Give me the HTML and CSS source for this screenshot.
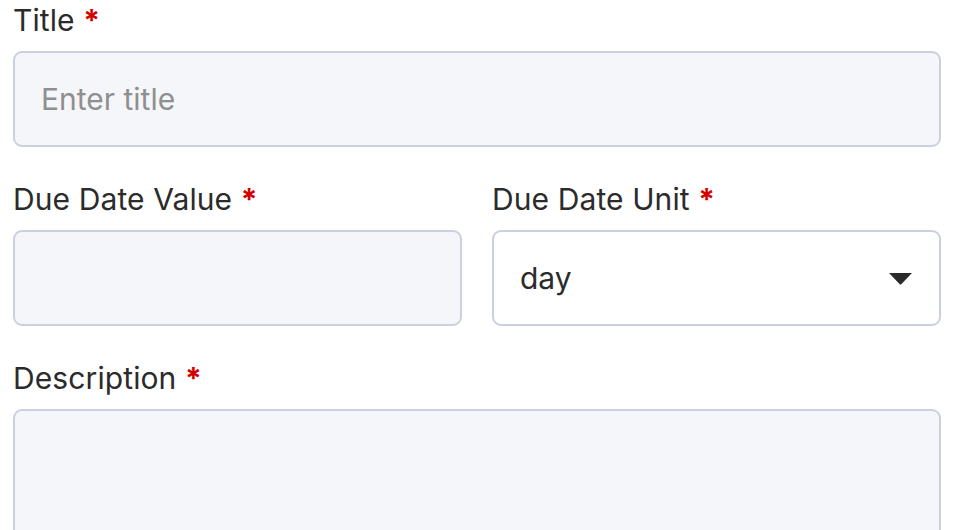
FILE: index.html
```html
<!DOCTYPE html>
<html>
<head>
<meta charset="utf-8">
<link rel="stylesheet" href="styles.css">
</head>
<body>
<form class="form">
  <div class="field">
    <label class="label">Title <span class="req">*</span></label>
    <div class="input"><span class="placeholder">Enter title</span></div>
  </div>
  <div class="row">
    <div class="field">
      <label class="label">Due Date Value <span class="req">*</span></label>
      <div class="input"></div>
    </div>
    <div class="field">
      <label class="label">Due Date Unit <span class="req">*</span></label>
      <div class="input select">
        <span class="value">day</span>
        <svg class="caret" width="25" height="13" viewBox="0 0 25 13"><path d="M1 1 H24 L13.5 12 Q12.5 13 11.5 12 Z" fill="#2b2b2b"/></svg>
      </div>
    </div>
  </div>
  <div class="field">
    <label class="label">Description <span class="req">*</span></label>
    <div class="input textarea"></div>
  </div>
</form>
</body>
</html>
```
FILE: styles.css
```css
html, body { margin: 0; padding: 0; background: #fff; }
body { font-family: Inter, "Noto Sans", sans-serif; color: #2b2b2b; overflow: hidden; height: 530px; }
.form { width: 928px; margin-left: 13px; display: flex; flex-direction: column; gap: 32px; }
.field { display: flex; flex-direction: column; gap: 11px; flex: 1; }
.label { font-size: 30px; line-height: 40px; display: block; letter-spacing: 0.1px; }
.req { color: #d40000; font-weight: 700; }
.input { height: 96px; box-sizing: border-box; border: 2px solid #cbd0e0; border-radius: 9px; background: #f5f6fa; display: flex; align-items: center; padding: 0 26px; font-size: 30px; }
.placeholder { color: #8f8f8f; }
.row { display: flex; gap: 30px; }
.select { background: #fff; justify-content: space-between; padding-right: 26px; }
.value { color: #2b2b2b; }
.textarea { height: 200px; }
```
